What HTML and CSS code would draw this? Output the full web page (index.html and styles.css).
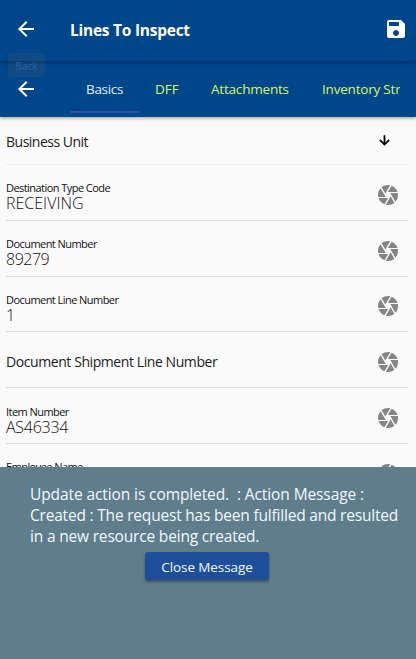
FILE: index.html
```html
<!DOCTYPE html>
<html lang="en">
<head>
<meta charset="utf-8">
<title>Lines To Inspect</title>
<link rel="stylesheet" href="styles.css">
</head>
<body>
<svg class="defs" width="0" height="0" aria-hidden="true">
  <symbol id="back" viewBox="0 0 24 24"><path d="M20 11H7.83l5.59-5.59L12 4l-8 8 8 8 1.41-1.41L7.83 13H20v-2z"/></symbol>
  <symbol id="down" viewBox="0 0 24 24"><path d="M20 12l-1.41-1.41L13 16.17V4h-2v12.17l-5.58-5.59L4 12l8 8 8-8z"/></symbol>
  <symbol id="save" viewBox="0 0 24 24"><path d="M17 3H5c-1.11 0-2 .9-2 2v14c0 1.1.89 2 2 2h14c1.1 0 2-.9 2-2V7l-4-4zm-5 16c-1.66 0-3-1.34-3-3s1.34-3 3-3 3 1.34 3 3-1.34 3-3 3zm3-10H5V5h10v4z"/></symbol>
  <symbol id="camera" viewBox="0 0 24 24"><path d="M9.4 10.5l4.77-8.26C13.47 2.09 12.75 2 12 2c-2.4 0-4.6.85-6.32 2.25l3.66 6.35.06-.1zM21.54 9c-.92-2.92-3.15-5.26-6-6.34L11.88 9h9.66zm.26 1h-7.49l.29.5 4.76 8.25C21 16.97 22 14.61 22 12c0-.69-.07-1.35-.2-2zM8.54 12l-3.9-6.75C3.01 7.03 2 9.39 2 12c0 .69.07 1.35.2 2h7.49l-1.15-2zm-6.08 3c.92 2.92 3.15 5.26 6 6.34L12.12 15H2.46zm11.27 0l-3.9 6.76c.7.15 1.42.24 2.17.24 2.4 0 4.6-.85 6.32-2.25l-3.66-6.35-.93 1.6z"/></symbol>
</svg>
<div class="screen">
  <header class="toolbar">
    <svg class="icon"><use href="#back"/></svg>
    <h1 class="title">Lines To Inspect</h1>
    <svg class="icon save"><use href="#save"/></svg>
    <span class="tooltip">Back</span>
  </header>
  <nav class="tabs">
    <svg class="icon"><use href="#back"/></svg>
    <div class="tab-strip">
      <a class="tab active">Basics</a>
      <a class="tab dff">DFF</a>
      <a class="tab attachments">Attachments</a>
      <a class="tab inventory">Inventory Str</a>
    </div>
  </nav>
  <main class="form">
    <div class="row first"><span class="name unit">Business Unit</span><svg class="arrow"><use href="#down"/></svg></div>
    <div class="row"><div class="field"><span class="label">Destination Type Code</span><span class="value">RECEIVING</span></div><svg class="camera"><use href="#camera"/></svg></div>
    <div class="row"><div class="field"><span class="label">Document Number</span><span class="value digits">89279</span></div><svg class="camera"><use href="#camera"/></svg></div>
    <div class="row"><div class="field"><span class="label">Document Line Number</span><span class="value">1</span></div><svg class="camera"><use href="#camera"/></svg></div>
    <div class="row"><span class="name ship">Document Shipment Line Number</span><svg class="camera"><use href="#camera"/></svg></div>
    <div class="row"><div class="field"><span class="label">Item Number</span><span class="value item">AS46334</span></div><svg class="camera"><use href="#camera"/></svg></div>
    <div class="row"><div class="field"><span class="label">Employee Name</span><span class="value"></span></div><svg class="camera"><use href="#camera"/></svg></div>
  </main>
  <section class="message">
    <p class="text"><span class="line m1">Update action is completed. &nbsp;: Action Message :</span><span class="line m2">Created : The request has been fulfilled and resulted</span><span class="line m3">in a new resource being created.</span></p>
    <button class="close"><span>Close Message</span></button>
  </section>
</div>
</body>
</html>
```

FILE: styles.css
```css
* { box-sizing: border-box; }
body { margin: 0; font-family: "Open Sans", "Noto Sans", sans-serif; background: #fafafa; }
.defs { position: absolute; }
.screen { display: flex; flex-direction: column; height: 659px; overflow: hidden; }
.icon { width: 24px; height: 24px; fill: #fff; flex: none; }
.toolbar { position: relative; z-index: 2; display: flex; align-items: center; flex: none; height: 61px; padding: 0 8px 3px 14px; background: #00468b; box-shadow: 0 1px 4px rgba(0,0,0,.45); }
.title { flex: 1; margin: 1px 0 0 32px; font-size: 15.5px; font-weight: 700; line-height: 20px; color: #fff; letter-spacing: -.25px; white-space: nowrap; }
.tooltip { position: absolute; left: 8px; top: 53px; width: 37px; height: 24px; border-radius: 3px; background: rgba(75,95,110,.2); color: #2d6196; font-size: 10px; line-height: 27px; text-align: center; }
.tabs { position: relative; z-index: 1; display: flex; align-items: center; flex: none; height: 56px; padding: 0 16px 0 14px; background: #00468b; box-shadow: 0 1px 4px rgba(0,0,0,.4); }
.tab-strip { display: flex; flex: 1; margin-left: 32px; height: 56px; overflow: hidden; }
.tab { flex: none; height: 52px; padding: 0 16px; font-size: 13.5px; line-height: 57px; color: #d9f75c; white-space: nowrap; }
.tab.active { width: 69px; color: #e2edfa; border-bottom: 2px solid #3050b0; letter-spacing: -.3px; }
.dff { width: 56px; }
.attachments { width: 111px; letter-spacing: -.2px; }
.inventory { letter-spacing: -.2px; }
.form { flex: none; height: 350px; padding: 0 8px 0 6px; overflow: hidden; }
.row { display: flex; align-items: center; justify-content: space-between; height: 55.8px; padding: 0 8px 0 0; border-bottom: 1px solid #dcdcdc; }
.row.first { height: 48px; padding-right: 16px; border-color: #eee; }
.field { display: flex; flex-direction: column; padding-top: 5px; height: 44px; }
.camera { width: 24px; height: 24px; fill: #858585; margin-top: 5px; }
.arrow { width: 15px; height: 15px; fill: #000; stroke: #000; stroke-width: .8px; }
.name { font-size: 14px; line-height: 20px; color: #1c1c1c; white-space: nowrap; }
.unit { margin-top: 3px; letter-spacing: -.5px; }
.ship { margin-top: 5px; letter-spacing: -.42px; }
.label { font-size: 11px; line-height: 15px; color: #111; letter-spacing: -.55px; white-space: nowrap; margin-top: 5px; }
.value { font-size: 16px; line-height: 16px; font-weight: 300; color: #111; }
.digits { letter-spacing: -.5px; }
.item { letter-spacing: -.25px; }
.message { flex: 1; display: flex; flex-direction: column; align-items: center; background: #607d8b; padding-top: 17px; }
.text { align-self: stretch; margin: 0 0 5px 30px; color: #f0f8ff; font-size: 15.5px; line-height: 21px; }
.line { display: block; white-space: pre; }
.m1 { letter-spacing: -.1px; }
.m2 { letter-spacing: -.2px; }
.m3 { letter-spacing: -.18px; }
.close { width: 124px; height: 28px; margin-right: 2px; padding: 2px 0 0; border: 0; border-radius: 3px; background: #1f4f9b; box-shadow: 0 2px 3px rgba(0,0,0,.35); color: #f0f8ff; font: 13.5px/26px "Open Sans", sans-serif; letter-spacing: -.08px; }
```
